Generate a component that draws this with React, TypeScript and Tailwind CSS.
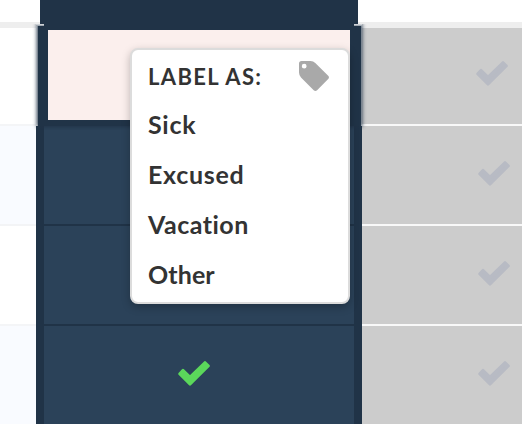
const labels = [
  { name: 'Sick', className: 'tracking-[0.7px]' },
  { name: 'Excused', className: 'tracking-[0.7px]' },
  { name: 'Vacation', className: 'tracking-[0.5px]' },
  { name: 'Other', className: 'tracking-[0.1px]' },
];

function CheckIcon({ className }: { className?: string }) {
  return (
    <svg
      viewBox="0 0 32 25"
      className={`h-[25px] w-8 ${className || ''}`}
      fill="currentColor"
      stroke="currentColor"
      strokeWidth="3.4"
      strokeLinejoin="round"
    >
      <path d="M12 16.5 27 1.9 30.1 4.9 12 22.9 2 12.9 5 9.6Z" />
    </svg>
  );
}

function TagIcon() {
  return (
    <svg viewBox="0 0 30 30" className="mb-0.5 h-[30px] w-[30px] text-[#a9a9a9]" fill="currentColor">
      <path
        fillRule="evenodd"
        d="M2.5 0H11.5Q14.3 0 16.3 2L29.2 14.7Q30.7 16.4 29.2 18L18.1 29.2Q16.4 30.7 14.7 29.2L2 16.4Q0 14.4 0 11.6V2.5Q0 0 2.5 0ZM5.2 2.8A2.4 2.4 0 1 0 5.2 7.6A2.4 2.4 0 1 0 5.2 2.8Z"
      />
    </svg>
  );
}

function LabelMenu() {
  return (
    <div className="absolute left-[130px] top-12 z-20 h-64 w-[220px] rounded-lg border-2 border-[#dcdcdc] bg-white px-4 text-[#333] shadow-[0_3px_9px_rgba(0,0,0,0.25)]">
      <div className="flex h-[49px] items-center justify-between pr-[3px] pt-1">
        <span className="text-[22px] font-bold leading-none tracking-[1.35px]">LABEL AS:</span>
        <TagIcon />
      </div>
      {labels.map((label) => (
        <div
          key={label.name}
          className="flex h-[50px] items-center text-[25px] font-bold leading-none [font-variant-ligatures:none]"
        >
          <span className={label.className}>{label.name}</span>
        </div>
      ))}
    </div>
  );
}

export default function App() {
  return (
    <div className="relative flex h-[424px] w-[522px] overflow-hidden bg-white font-['Lato',sans-serif]">
      {/* previous day */}
      <div className="w-9 shrink-0">
        <div className="h-7 border-b-[6px] border-[#eee] bg-white" />
        <div className="h-[98px] border-b-2 border-[#f4f5f7] bg-white" />
        <div className="h-[100px] border-b-2 border-[#f3f4f6] bg-[#f9fbff]" />
        <div className="h-[100px] border-b-2 border-[#f4f5f7] bg-white" />
        <div className="h-[98px] bg-[#f9fbff]" />
      </div>

      {/* selected day */}
      <div className="z-10 w-[326px] shrink-0">
        <div className="flex h-6 justify-center bg-[linear-gradient(#fff_22px,#eee_22px)]">
          <div className="w-[318px] bg-[#203347]" />
        </div>
        <div className="relative z-10 ml-[2px] mr-px h-[102px] border-b-[6px] border-l-[10px] border-r-[11px] border-t-[6px] border-[#203347] bg-[#203347] shadow-[0_0_4px_1px_#203347] [clip-path:inset(0_-6px_-4px_-6px)]">
          <div className="h-[90px] bg-[#fbefed]" />
          {/* header rule overlapping the cell corners */}
          <div className="absolute -left-3 -top-1.5 h-0.5 w-2 bg-linear-to-b from-[#e4e6e8] to-[#8d97a2]" />
          <div className="absolute -right-3 -top-1.5 h-0.5 w-2 bg-linear-to-b from-[#e4e6e8] to-[#8d97a2]" />
        </div>
        <div className="h-[298px] border-x-8 border-[#203347] bg-[#2b4259]">
          <div className="h-[100px] border-b-2 border-[#203347]" />
          <div className="h-[100px] border-b-2 border-[#203347]" />
          <div className="flex h-[98px] pl-[134px] pt-[35px]">
            <CheckIcon className="text-[#5bd75b]" />
          </div>
        </div>
      </div>

      {/* upcoming day */}
      <div className="w-40 shrink-0 text-[#b8bbc4]">
        <div className="h-7 border-b-[6px] border-[#eee] bg-white" />
        <div className="flex h-[98px] border-b-2 border-[#f8f8f8] bg-[#ccc] pl-[114px] pt-[33px]">
          <CheckIcon />
        </div>
        <div className="flex h-[100px] border-b-2 border-[#f8f8f8] bg-[#ccc] pl-[116px] pt-[35px]">
          <CheckIcon />
        </div>
        <div className="flex h-[100px] border-b-2 border-[#f8f8f8] bg-[#ccc] pl-[116px] pt-[35px]">
          <CheckIcon />
        </div>
        <div className="flex h-[98px] bg-[#ccc] pl-[116px] pt-[35px]">
          <CheckIcon />
        </div>
      </div>

      <LabelMenu />
    </div>
  );
}
